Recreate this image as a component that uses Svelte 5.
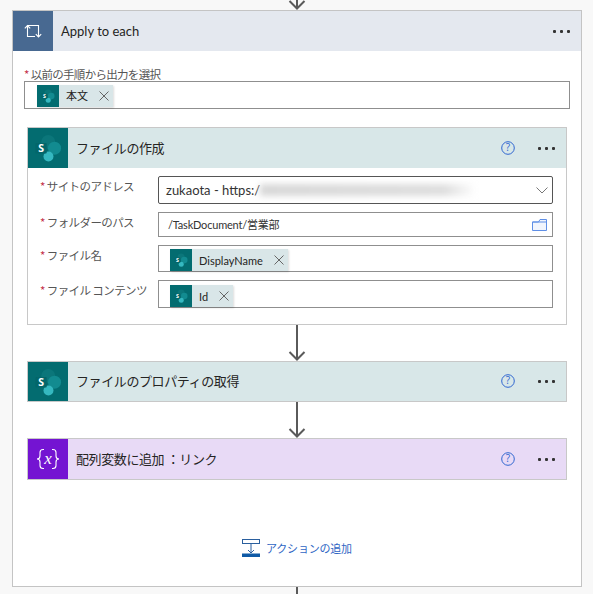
<script>
  const fields = [
    { label: 'サイトのアドレス', kind: 'select' },
    { label: 'フォルダーのパス', kind: 'path' },
    { label: 'ファイル名', kind: 'chip', chip: 'DisplayName' },
    { label: 'ファイル コンテンツ', kind: 'chip', chip: 'Id' }
  ];
</script>

{#snippet sp(size)}
  <svg class="sp" width={size} height={size} viewBox="0 0 24 24" aria-hidden="true">
    <circle cx="12.2" cy="6.800" r="6" fill="#0b767a" />
    <circle cx="17.600" cy="12.200" r="5.600" fill="#128b90" />
    <circle cx="12.400" cy="19.300" r="4.300" fill="#35b8c0" />
    <rect x="1.300" y="7.700" width="9.600" height="9" rx=".8" fill="#03666a" />
    <text x="6.100" y="15.600" text-anchor="middle" class="sp-s">S</text>
  </svg>
{/snippet}

{#snippet chip(text)}
  <span class="chip">
    <span class="chip-icon">{@render sp(14)}</span>
    <span class="chip-text">{text}</span>
    <svg class="chip-x" width="10" height="10" viewBox="0 0 10 10" aria-hidden="true"><path d="M.5.5l9 9M9.500.5l-9 9" stroke="#666" fill="none" /></svg>
  </span>
{/snippet}

{#snippet more()}
  <span class="more"><i></i><i></i><i></i></span>
{/snippet}

{#snippet help()}
  <svg class="help" width="14" height="14" viewBox="0 0 14 14" aria-hidden="true">
    <circle cx="7" cy="7" r="6.300" fill="none" stroke="#2f66d0" />
    <text x="7" y="10.400" text-anchor="middle" class="help-q">?</text>
  </svg>
{/snippet}

{#snippet arrow(h)}
  <svg class="arrow" width="18" height={h} viewBox="0 0 18 {h}" aria-hidden="true">
    <path d="M9 0V{h - 1}M1.500 {h - 9}L9 {h - 1.500}L16.500 {h - 9}" stroke="#5a5a5a" stroke-width="2" fill="none" />
  </svg>
{/snippet}

<div class="page">
  <div class="top-arrow">{@render arrow(10)}</div>

  <section class="loop">
    <header class="loop-head">
      <span class="head-icon loop-icon">
        <svg width="18" height="14" viewBox="0 0 18 14" aria-hidden="true">
          <path d="M3.500 13V1.500H14.500V13M.8 4.300L3.500 1.500L6.200 4.300M11.800 10.200L14.500 13L17.200 10.200M3.500 12.500H11" stroke="#fff" stroke-width="1.100" fill="none" />
        </svg>
      </span>
      <span class="loop-title">Apply to each</span>
      {@render more()}
    </header>

    <div class="loop-body">
      <div class="select-label"><span class="req">*</span>以前の手順から出力を選択</div>
      <div class="input loop-input">{@render chip('本文')}</div>

      <article class="card expanded">
        <header class="card-head sp-head">
          <span class="head-icon sp-icon">{@render sp(28)}</span>
          <span class="card-title">ファイルの作成</span>
          {@render help()}
          {@render more()}
        </header>
        <div class="form">
          {#each fields as f}
            <div class="row row-{f.kind}">
              <div class="lab"><span class="req">*</span>{f.label}</div>
              {#if f.kind === 'select'}
                <div class="input field select">
                  <span class="val">zukaota - https:/</span>
                  <span class="blur"></span>
                  <svg class="chev" width="12" height="7" viewBox="0 0 12 7" aria-hidden="true"><path d="M.5.5L6 6l5.500-5.500" stroke="#777" fill="none" /></svg>
                </div>
              {:else if f.kind === 'path'}
                <div class="input field path">
                  <span class="path-val">/TaskDocument/営業部</span>
                  <svg class="folder" width="15" height="12" viewBox="0 0 15 12" aria-hidden="true">
                    <path d="M.5 3V11.500H14.500V.5H8L6.500 3ZM.5 3H14.500" stroke="#5f8fe6" fill="#f1f5fd" />
                  </svg>
                </div>
              {:else}
                <div class="input field chips">{@render chip(f.chip)}</div>
              {/if}
            </div>
          {/each}
        </div>
      </article>

      <div class="link">{@render arrow(36)}</div>

      <article class="card">
        <header class="card-head sp-head short">
          <span class="head-icon sp-icon">{@render sp(28)}</span>
          <span class="card-title">ファイルのプロパティの取得</span>
          {@render help()}
          {@render more()}
        </header>
      </article>

      <div class="link">{@render arrow(36)}</div>

      <article class="card">
        <header class="card-head var-head">
          <span class="head-icon var-icon">
            <svg width="28" height="22" viewBox="0 0 28 22" aria-hidden="true">
              <path d="M10 1.500H9Q6 1.500 6 4.500V8Q6 11 3 11Q6 11 6 14V17.500Q6 20.500 9 20.500H10M18 1.500H19Q22 1.500 22 4.500V8Q22 11 25 11Q22 11 22 14V17.500Q22 20.500 19 20.500H18" stroke="#fff" stroke-width="1.100" fill="none" />
              <text x="14" y="16" text-anchor="middle" class="var-x">x</text>
            </svg>
          </span>
          <span class="card-title">配列変数に追加 ：リンク</span>
          {@render help()}
          {@render more()}
        </header>
      </article>

      <div class="add">
        <svg width="18" height="18" viewBox="0 0 18 18" aria-hidden="true">
          <rect x=".5" y=".5" width="17" height="4" fill="none" stroke="#2a5f9e" />
          <path d="M9 5V14M6 11L9 14L12 11" stroke="#2a5f9e" fill="none" />
          <rect x="0" y="14.500" width="18" height="3.500" fill="#0f5aa6" />
        </svg>
        <span>アクションの追加</span>
      </div>
    </div>
  </section>

  <div class="bottom-arrow"></div>
</div>

<style>
  :global(body) {
    margin: 0;
    background: #f8f8f8;
  }
  .page {
    width: 593px;
    height: 594px;
    overflow: hidden;
    font-family: "Noto Sans CJK JP", "Noto Sans", sans-serif;
    color: #252423;
  }
  .top-arrow {
    height: 10px;
    display: flex;
    justify-content: center;
    overflow: hidden;
  }
  .top-arrow svg {
    margin-left: 1px;
  }
  .loop {
    box-sizing: border-box;
    width: 570px;
    height: 577px;
    margin-left: 12px;
    background: #fff;
    border: 1px solid #c4c4c4;
  }
  .loop-head,
  .card-head {
    display: flex;
    align-items: center;
    height: 40px;
  }
  .loop-head {
    background: #e4e8ef;
  }
  .head-icon {
    width: 40px;
    height: 100%;
    flex: none;
    display: flex;
    align-items: center;
    justify-content: center;
  }
  .loop-icon {
    background: #486991;
  }
  .loop-title {
    margin-left: 8px;
    flex: 1;
    font-family: Lato, "Open Sans", sans-serif;
    font-size: 13px;
  }
  .more {
    display: flex;
    gap: 4px;
    width: 17px;
    margin-right: 11px;
    margin-left: 23px;
  }
  .more i {
    width: 3px;
    height: 3px;
    border-radius: 1px;
    background: #333;
  }
  .loop-body {
    padding: 16px 11px 0 11px;
    display: flex;
    flex-direction: column;
  }
  .select-label {
    font-size: 11.500px;
    letter-spacing: -0.7px;
    line-height: 14px;
    color: #555;
  }
  .req {
    color: #c4314b;
    margin-right: 2px;
  }
  .input {
    box-sizing: border-box;
    background: #fff;
    border: 1px solid #8f8f8f;
    display: flex;
    align-items: center;
  }
  .loop-input {
    width: 546px;
    height: 28px;
    padding-left: 12px;
    padding-top: 1px;
  }
  .chip {
    display: inline-flex;
    align-items: center;
    height: 22px;
    background: #d9e6e8;
    box-shadow: 1px 1px 2px rgba(0, 0, 0, 0.14);
    font-size: 11px;
    color: #252423;
  }
  .chip-icon {
    width: 22px;
    height: 22px;
    background: #036c70;
    display: flex;
    align-items: center;
    justify-content: center;
  }
  .chip-text {
    margin: 0 11px 0 7px;
    font-family: Lato, "Noto Sans CJK JP", sans-serif;
  }
  .loop-input .chip-text {
    padding-bottom: 2px;
  }
  .chips .chip-text {
    padding-top: 1px;
  }
  .chip-x {
    margin-right: 4px;
  }
  .sp-s {
    font: 700 9px "Open Sans", sans-serif;
    fill: #fff;
  }
  .card {
    box-sizing: border-box;
    width: 540px;
    margin-left: 3px;
    background: #fff;
    border: 1px solid #c8c8c8;
  }
  .expanded {
    margin-top: 18px;
    height: 198px;
  }
  .sp-head {
    background: #d8e7e8;
  }
  .sp-head.short {
    height: 39px;
  }
  .sp-icon {
    background: #036c70;
  }
  .var-head {
    background: #e8daf6;
  }
  .var-icon {
    background: #7414d2;
  }
  .var-x {
    font: italic 17px "Liberation Serif", serif;
    fill: #fff;
  }
  .card-title {
    margin-left: 8px;
    flex: 1;
    font-size: 13px;
    letter-spacing: -0.4px;
    padding-bottom: 2px;
  }
  .help {
    flex: none;
    margin-left: 8px;
    margin-bottom: 1px;
  }
  .help-q {
    font: 10px "Open Sans", sans-serif;
    fill: #2f66d0;
  }
  .form {
    padding: 8px 13px 0 12px;
    display: flex;
    flex-direction: column;
    gap: 8px;
  }
  .row {
    display: flex;
    align-items: flex-start;
  }
  .lab {
    width: 118px;
    flex: none;
    font-size: 11.500px;
    letter-spacing: -0.6px;
    line-height: 14px;
    color: #555;
    padding-top: 3px;
  }
  .field {
    width: 395px;
  }
  .select {
    height: 28px;
    border-color: #555;
    border-radius: 2px;
    padding: 0 4px 0 7px;
    font-family: Lato, "Open Sans", sans-serif;
    font-size: 13px;
    color: #333;
  }
  .blur {
    width: 216px;
    height: 12px;
    background: linear-gradient(90deg, #d8d8d8, #dedede 85%, #fff);
    filter: blur(3px);
  }
  .chev {
    margin-left: auto;
  }
  .path {
    height: 25px;
    padding: 0 5px 0 9px;
    justify-content: space-between;
  }
  .path-val {
    font-family: Lato, "Noto Sans CJK JP", sans-serif;
    font-size: 11px;
    letter-spacing: -0.2px;
    color: #333;
    padding-bottom: 2px;
  }
  .chips {
    height: 28px;
    padding-left: 11px;
    padding-top: 3px;
  }
  .row:nth-child(3) .chips {
    height: 27px;
  }
  .link {
    height: 36px;
    display: flex;
    justify-content: center;
  }
  .add {
    margin-top: 59px;
    display: flex;
    align-items: center;
    justify-content: center;
    gap: 6px;
    color: #2f66c4;
    font-size: 11px;
    letter-spacing: -0.2px;
  }
  .bottom-arrow {
    width: 2px;
    height: 8px;
    margin-left: 296px;
    background: #5a5a5a;
  }
</style>
